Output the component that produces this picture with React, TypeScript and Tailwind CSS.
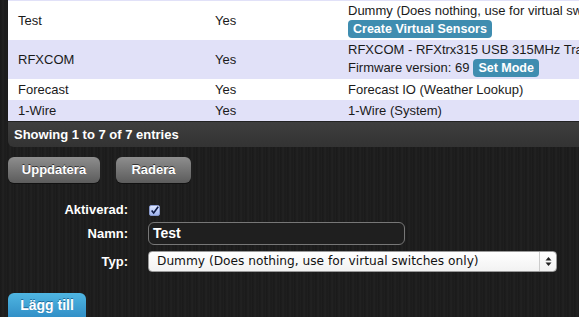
import React from 'react';

const rows = [
  { name: 'Test', enabled: 'Yes', desc: 'Dummy (Does nothing, use for virtual switches only)', badge: 'Create Virtual Sensors', tall: true, alt: false },
  { name: 'RFXCOM', enabled: 'Yes', desc: 'RFXCOM - RFXtrx315 USB 315MHz Transceiver', extra: 'Firmware version: 69', badge: 'Set Mode', tall: true, alt: true },
  { name: 'Forecast', enabled: 'Yes', desc: 'Forecast IO (Weather Lookup)', tall: false, alt: false },
  { name: '1-Wire', enabled: 'Yes', desc: '1-Wire (System)', tall: false, alt: true },
];

const Badge: React.FC<{ label: string }> = ({ label }) => (
  <span className="inline-flex h-[18px] items-center rounded-[4px] bg-[#3f8db0] px-[5px] text-[12.5px] font-bold text-white">
    {label}
  </span>
);

const GrayButton: React.FC<{ label: string; w: string }> = ({ label, w }) => (
  <button
    className={`${w} h-[26px] rounded-[6px] bg-gradient-to-b from-[#8e8e8e] to-[#5c5c5c] text-[13px] font-bold text-white shadow-[0_1px_0_#111] [text-shadow:0_-1px_0_#333]`}
  >
    {label}
  </button>
);

export default function App() {
  return (
    <div
      className="relative h-[317px] w-[579px] overflow-hidden bg-[#1c1c1c] bg-[repeating-linear-gradient(90deg,#1a1a1a_0px,#1d1d1d_2px,#232323_3px,#1b1b1b_5px,#202020_7px)] text-[13px]"
      style={{ fontFamily: '"Liberation Sans", Arial, sans-serif' }}
    >
      {/* Table */}
      <div className="ml-[8px] w-[620px]">
        <div className="h-[1px] bg-[#e1e1f8]" />
        {rows.map((r) => (
          <div
            key={r.name}
            className={`flex items-center text-[#1a1a1a] ${r.alt ? 'bg-[#e1e1f8]' : 'bg-white'} ${r.tall ? 'h-[39px]' : 'h-[21px]'}`}
          >
            <div className="w-[207px] shrink-0 pl-[10px]">{r.name}</div>
            <div className="w-[133px] shrink-0">{r.enabled}</div>
            <div className="min-w-0 flex-1 whitespace-nowrap leading-[16px]">
              <div>{r.desc}</div>
              {r.badge && (
                <div className="mt-[1px] flex items-center gap-[4px]">
                  {r.extra && <span>{r.extra}</span>}
                  <Badge label={r.badge} />
                </div>
              )}
            </div>
          </div>
        ))}
        <div className="flex h-[26px] items-center rounded-bl-[6px] border-t border-[#222] bg-gradient-to-b from-[#3e3e3e] to-[#333] pl-[6px] text-[13px] font-bold text-white">
          Showing 1 to 7 of 7 entries
        </div>
      </div>

      {/* Buttons */}
      <div className="ml-[8px] mt-[10px] flex gap-[16px]">
        <GrayButton label="Uppdatera" w="w-[92px]" />
        <GrayButton label="Radera" w="w-[75px]" />
      </div>

      {/* Form */}
      <div className="mt-[19px] flex flex-col text-[13px] font-bold text-white">
        <div className="flex h-[16px] items-center gap-[20px]">
          <div className="w-[128px] text-right">Aktiverad:</div>
          <span className="ml-[1px] flex h-[11px] w-[11px] items-center justify-center rounded-[2px] border border-[#8899cc] bg-gradient-to-b from-[#dde6ff] to-[#9fb4ee]">
            <svg width="11" height="11" viewBox="0 0 11 11">
              <path d="M2 5.5 L4.5 8.5 L10 1" fill="none" stroke="#0d1a44" strokeWidth="2" />
            </svg>
          </span>
        </div>

        <div className="mt-[4px] flex items-center gap-[20px]">
          <div className="w-[128px] text-right">Namn:</div>
          <div className="flex h-[23px] w-[257px] items-center rounded-[6px] border border-[#777] bg-[#1f1f1f] pl-[4px] text-[14px] font-bold text-white">
            Test
          </div>
        </div>

        <div className="mt-[6px] flex items-center gap-[20px]">
          <div className="w-[128px] text-right">Typ:</div>
          <div className="flex h-[21px] w-[409px] items-center justify-between rounded-[4px] border border-[#999] bg-gradient-to-b from-white to-[#f2f2f2] pl-[8px] font-normal text-[#111]">
            <span style={{ fontFamily: '"DejaVu Sans", sans-serif', fontSize: '12.2px' }}>
              Dummy (Does nothing, use for virtual switches only)
            </span>
            <span className="flex h-full w-[17px] items-center justify-center border-l border-[#ccc]">
              <svg width="7" height="11" viewBox="0 0 7 11">
                <path d="M3.5 1 L6.5 4.5 L0.5 4.5 Z" fill="#222" />
                <path d="M3.5 10 L6.5 6.5 L0.5 6.5 Z" fill="#222" />
              </svg>
            </span>
          </div>
        </div>
      </div>

      {/* Add button */}
      <div className="ml-[8px] mt-[21px]">
        <button className="flex h-[30px] w-[78px] items-start justify-center rounded-t-[6px] bg-gradient-to-b from-[#4fb6e2] to-[#2a86c0] pt-[2px] text-[14px] font-bold text-white [text-shadow:0_-1px_0_#1f6b9a]">
          Lägg till
        </button>
      </div>
    </div>
  );
}
